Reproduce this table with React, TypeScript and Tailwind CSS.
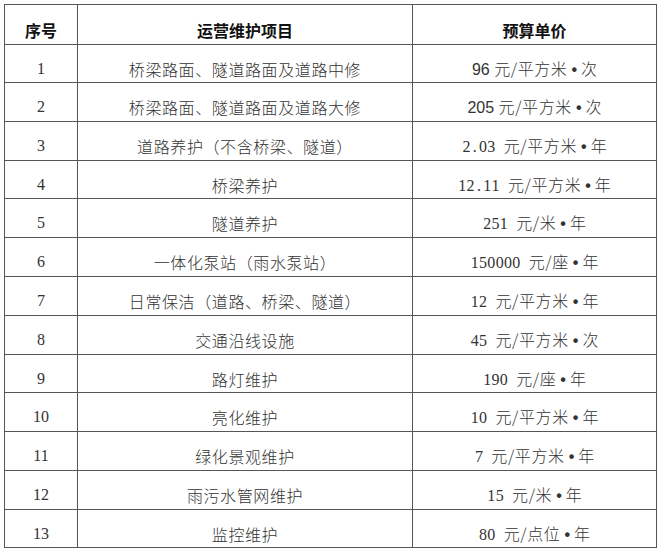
import React from "react";

type Row = { n: string; item: string; num: string; unit: string; sans?: boolean; h: string };

const rows: Row[] = [
  { n: "1", item: "桥梁路面、隧道路面及道路中修", num: "96", unit: "元/平方米", tail: "次", sans: true, h: "h-[38px]" } as any,
  { n: "2", item: "桥梁路面、隧道路面及道路大修", num: "205", unit: "元/平方米", tail: "次", sans: true, h: "h-[39px]" } as any,
  { n: "3", item: "道路养护（不含桥梁、隧道）", num: "2.03", unit: "元/平方米", tail: "年", h: "h-[39px]" } as any,
  { n: "4", item: "桥梁养护", num: "12.11", unit: "元/平方米", tail: "年", h: "h-[38px]" } as any,
  { n: "5", item: "隧道养护", num: "251", unit: "元/米", tail: "年", h: "h-[39px]" } as any,
  { n: "6", item: "一体化泵站（雨水泵站）", num: "150000", unit: "元/座", tail: "年", h: "h-[39px]" } as any,
  { n: "7", item: "日常保洁（道路、桥梁、隧道）", num: "12", unit: "元/平方米", tail: "年", h: "h-[39px]" } as any,
  { n: "8", item: "交通沿线设施", num: "45", unit: "元/平方米", tail: "次", h: "h-[39px]" } as any,
  { n: "9", item: "路灯维护", num: "190", unit: "元/座", tail: "年", h: "h-[38px]" } as any,
  { n: "10", item: "亮化维护", num: "10", unit: "元/平方米", tail: "年", h: "h-[39px]" } as any,
  { n: "11", item: "绿化景观维护", num: "7", unit: "元/平方米", tail: "年", h: "h-[39px]" } as any,
  { n: "12", item: "雨污水管网维护", num: "15", unit: "元/米", tail: "年", h: "h-[39px]" } as any,
  { n: "13", item: "监控维护", num: "80", unit: "元/点位", tail: "年", h: "h-[38px]" } as any,
];

const serif = "font-['Liberation_Serif','Noto_Sans_CJK_SC',serif]";
const cjk = "font-['Noto_Sans_CJK_SC',sans-serif]";

function HalfWidth({ text }: { text: string }) {
  return (
    <span className={serif}>
      {text.split("").map((c, i) => (
        <span key={i} className="inline-block w-[8.3px] text-center">
          {c}
        </span>
      ))}
      <span className="inline-block w-[8.3px]">&nbsp;</span>
    </span>
  );
}

function Cell({ w, children, bold }: { w: string; children: React.ReactNode; bold?: boolean }) {
  return (
    <div
      className={`${w} flex shrink-0 items-center justify-center border-r border-b border-[#555] pt-[10px] text-[16px] leading-[22px] ${
        bold ? "font-bold text-[#111]" : "font-light text-[#333]"
      }`}
    >
      {children}
    </div>
  );
}

export default function App() {
  return (
    <div className="min-h-[553px] w-[660px] bg-white pt-[4px] pl-[4px]">
      <div className="flex w-[653px] flex-col border-t border-l border-[#555]">
        <div className="flex h-[40px]">
          <Cell w="w-[73px]" bold>
            <span className={cjk}>序号</span>
          </Cell>
          <Cell w="w-[335px]" bold>
            <span className={cjk}>运营维护项目</span>
          </Cell>
          <Cell w="w-[244px]" bold>
            <span className={cjk}>预算单价</span>
          </Cell>
        </div>
        {rows.map((r: any) => (
          <div key={r.n} className={`flex ${r.h}`}>
            <Cell w="w-[73px]">
              <span className={serif}>{r.n}</span>
            </Cell>
            <Cell w="w-[335px]">
              <span className={`${cjk} tracking-[0.6px]`}>{r.item}</span>
            </Cell>
            <Cell w="w-[244px]">
              <span className="whitespace-nowrap">
                {r.sans ? (
                  <span className="font-['Liberation_Sans',sans-serif] font-normal">{r.num}&nbsp;</span>
                ) : (
                  <HalfWidth text={r.num} />
                )}
                <span className={`${cjk} tracking-[0.6px]`}>{r.unit}</span>
                <span className="inline-block px-[4px] font-['Liberation_Sans',sans-serif] font-bold">•</span>
                <span className={cjk}>{r.tail}</span>
              </span>
            </Cell>
          </div>
        ))}
      </div>
    </div>
  );
}
